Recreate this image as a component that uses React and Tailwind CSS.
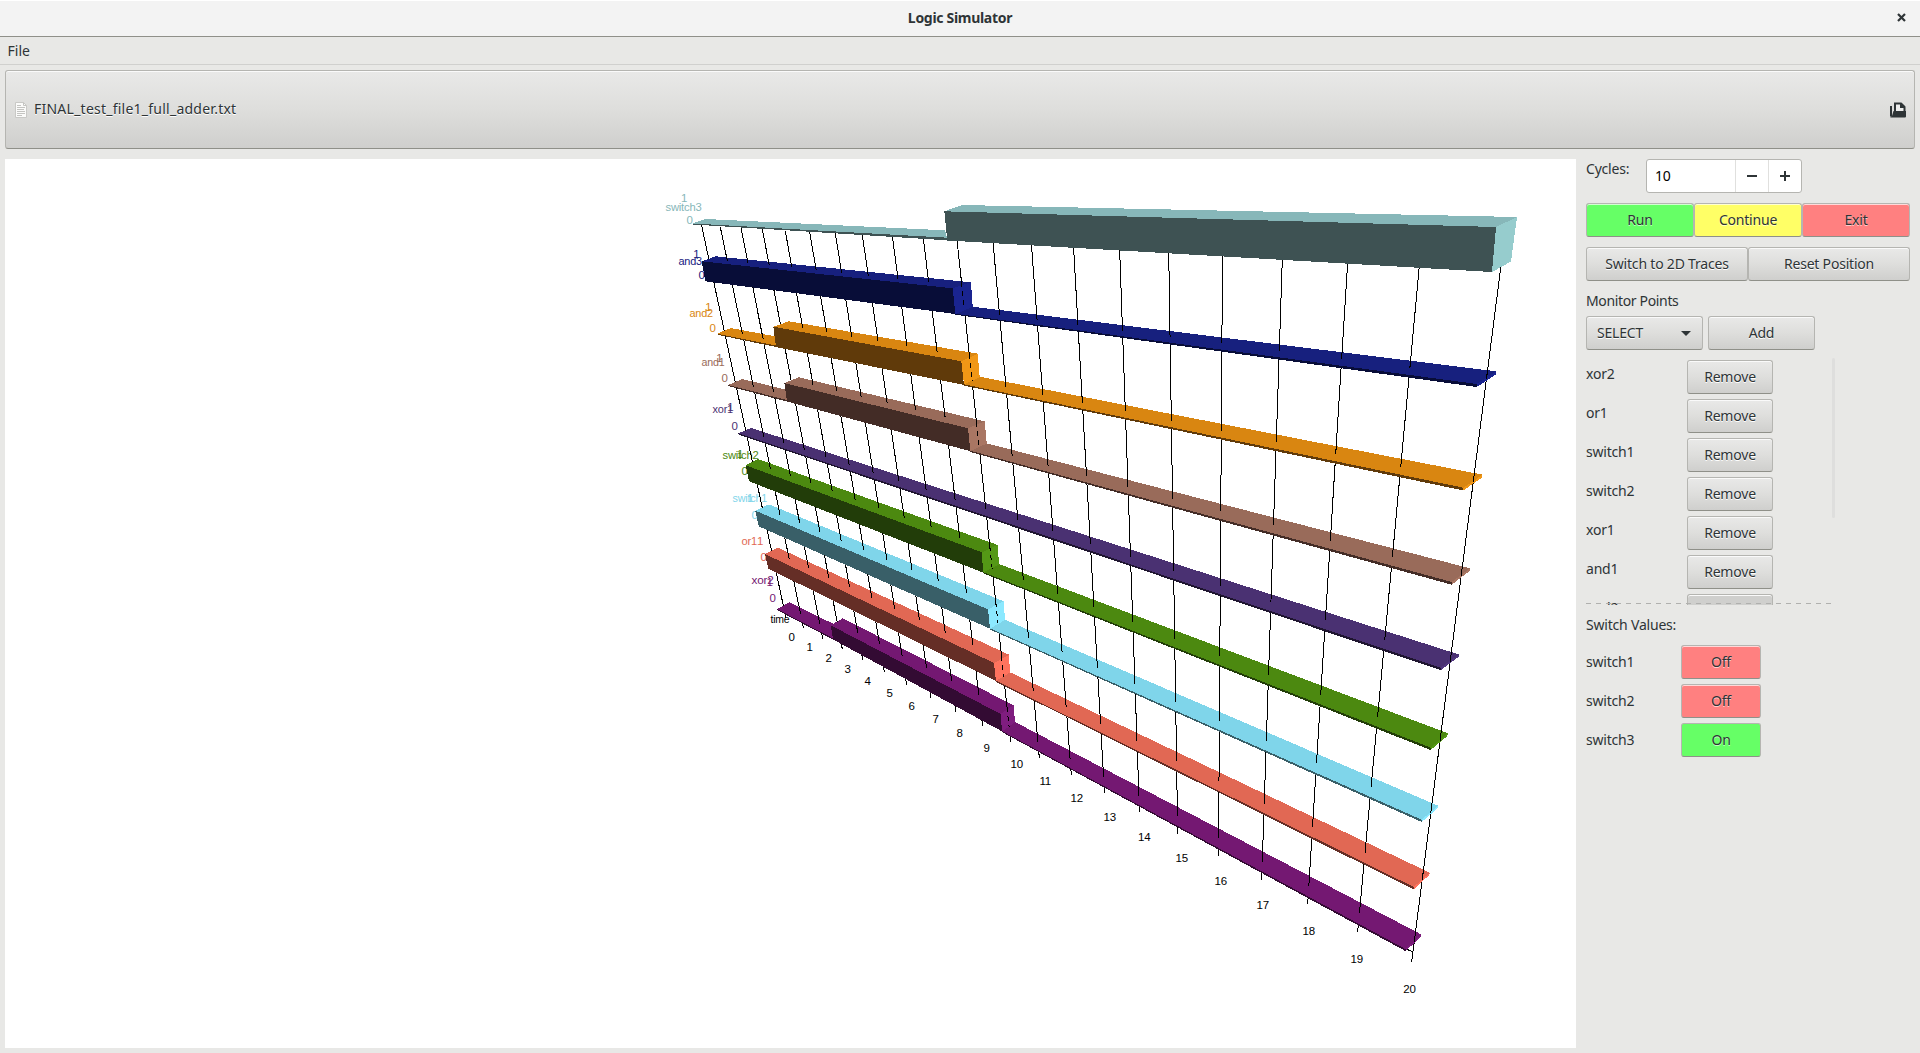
const BTN_BASE =
  'flex items-center justify-center rounded-[3px] border border-[#b5b5b1] border-b-[#8f9089] shadow-[inset_0_1px_0_#fafafa] [text-shadow:0_1px_0_#ffffff] h-[34px]';
const BTN = `${BTN_BASE} bg-gradient-to-b from-[#e9e9e8] via-[#dededc] to-[#cfcfcd]`;
const TINT =
  'flex items-center justify-center rounded-[3px] border border-[#b5b5b1] border-b-[#8f9089] shadow-[inset_0_1px_0_rgba(255,255,255,0.7)] [text-shadow:0_1px_0_rgba(255,255,255,0.6)] h-[34px]';

// Each trace: label anchors and faces in canvas pixels.
// Segments hold the front-top (f), front-bottom (b) and back-top (k) edges, left to right.
const TRACES = [
  {
    name: 'switch3', w: 36, nx: 665.5, ny: 211, one: [681, 202], zero: [686.5, 224],
    top: '#87b7b9', front: '#3e5253', end: '#96cccd',
    segs: [
      { f: [692.7, 223.5, 947, 237.7], b: [693, 224.5, 947, 240.3], k: [705, 219, 945, 230.3] },
      { f: [944.3, 211.3, 1496, 227], b: [947.3, 240.5, 1492, 272], k: [962.3, 205, 1517, 217] },
    ],
    ends: [[1496, 227, 1517, 217, 1511, 261.5, 1492, 272]],
  },
  {
    name: 'and3', w: 23.5, nx: 678.5, ny: 264.5, one: [693.3, 258], zero: [698.5, 279],
    top: '#17207e', front: '#080d38', end: '#1a2490',
    segs: [
      { f: [955.3, 313.7, 1476.7, 384], b: [955.3, 314.7, 1476.7, 387], k: [972.7, 306.7, 1496, 371.3] },
      { f: [701.7, 261.3, 952.7, 288.3], b: [705.3, 281.3, 955.3, 314], k: [715.7, 256.3, 971, 282.3] },
    ],
    ends: [
      [952.7, 288.3, 971, 282.3, 972.7, 307, 955.3, 314],
      [1476.7, 384, 1496, 371.3, 1496, 374.5, 1476.7, 387],
    ],
  },
  {
    name: 'and2', w: 23.5, nx: 689.5, ny: 316.5, one: [705.3, 310.5], zero: [709.5, 332],
    top: '#d98611', front: '#603a0a', end: '#f19716',
    segs: [
      { f: [717.3, 333.7, 776, 345.5], b: [717.6, 334.8, 776, 347], k: [730.7, 328, 776, 336.5] },
      { f: [964, 384.3, 1463.3, 487.7], b: [964, 385.6, 1463.3, 490.5], k: [979.7, 376.7, 1482.7, 474.7] },
      { f: [773.3, 326.7, 961.3, 361.3], b: [776, 347, 964, 385], k: [789, 321.3, 977.7, 353.7] },
    ],
    ends: [
      [961.3, 361.3, 977.7, 353.7, 979.7, 377, 964, 384.6],
      [1463.3, 487.7, 1482.7, 474.7, 1482, 477.5, 1463.3, 490.5],
    ],
  },
  {
    name: 'and1', w: 23, nx: 701.5, ny: 366, one: [716.3, 362], zero: [721.5, 382],
    top: '#996b5a', front: '#432c26', end: '#a97663',
    segs: [
      { f: [728.3, 385, 787, 400], b: [728.6, 386.2, 787, 401.6], k: [742.3, 379, 787, 390] },
      { f: [970.3, 450.7, 1451.7, 582], b: [970.3, 452, 1451.7, 584.7], k: [986.7, 443.3, 1470, 568.3] },
      { f: [784.3, 383, 968, 428.3], b: [787, 401.5, 970.3, 451.2], k: [799, 377.3, 984.7, 421.3] },
    ],
    ends: [
      [968, 428.3, 984.7, 421.3, 986.7, 443.5, 970.3, 451],
      [1451.7, 582, 1470, 568.3, 1469.5, 571, 1451.7, 584.7],
    ],
  },
  {
    name: 'xor1', w: 20.5, nx: 712.5, ny: 413, one: [727.3, 411], zero: [731.5, 430],
    top: '#4a3172', front: '#1f1530', end: '#533880',
    segs: [{ f: [738.3, 433.4, 1440.7, 667.6], b: [738.6, 434.6, 1440.7, 670.2], k: [751, 428, 1459, 654.5] }],
    ends: [[1440.7, 667.6, 1459, 654.5, 1458.5, 657, 1440.7, 670.2]],
  },
  {
    name: 'switch2', w: 36, nx: 722.5, ny: 459, one: [737, 458], zero: [741.5, 475.3],
    top: '#4c8910', front: '#223d09', end: '#549816',
    segs: [
      { f: [983, 572, 1430.7, 747.6], b: [983, 573.3, 1430.7, 750], k: [999, 564, 1447.7, 733.2] },
      { f: [745.7, 465.3, 982, 552.3], b: [749, 481.3, 983, 572.5], k: [758, 459, 997.7, 545] },
    ],
    ends: [
      [982, 552.3, 997.7, 545, 999, 564.3, 983, 572.5],
      [1430.7, 747.6, 1447.7, 733.2, 1447.3, 736, 1430.7, 750],
    ],
  },
  {
    name: 'switch1', w: 34.5, nx: 732.5, ny: 502, one: [747, 502], zero: [751.5, 519],
    top: '#7fd5ea', front: '#395f68', end: '#8ce9ff',
    segs: [
      { f: [990, 628.3, 1421.7, 819.7], b: [990, 629.5, 1421.7, 822], k: [1005, 619.7, 1438, 805.7] },
      { f: [755.3, 510.7, 988, 609.3], b: [758.7, 526.3, 990, 628.7], k: [769, 504.3, 1003.7, 601.3] },
    ],
    ends: [
      [988, 609.3, 1003.7, 601.3, 1005, 620, 990, 628.7],
      [1421.7, 819.7, 1438, 805.7, 1437.5, 808.5, 1421.7, 822],
    ],
  },
  {
    name: 'or1', w: 15.5, nx: 741.5, ny: 544.5, one: [757, 545], zero: [760.5, 561],
    top: '#e16854', front: '#652e26', end: '#ff735e',
    segs: [
      { f: [996, 680.7, 1413.7, 887], b: [996, 681.9, 1413.7, 889.4], k: [1010, 672.3, 1429.7, 872.7] },
      { f: [765, 554, 994, 663], b: [768.3, 568.6, 996, 681], k: [778, 547.7, 1009, 654.7] },
    ],
    ends: [
      [994, 663, 1009, 654.7, 1010, 672.5, 996, 681],
      [1413.7, 887, 1429.7, 872.7, 1429.3, 875, 1413.7, 889.4],
    ],
  },
  {
    name: 'xor2', w: 22, nx: 751.5, ny: 584.3, one: [766.5, 585.5], zero: [769.5, 602],
    top: '#741872', front: '#330b33', end: '#7f1d7f',
    segs: [
      { f: [777, 609, 833, 638.3], b: [777.3, 610.2, 833, 639.5], k: [789.3, 602.3, 833, 623.7] },
      { f: [1002, 731, 1405.7, 949.2], b: [1002, 732.1, 1405.7, 951.2], k: [1015, 722, 1421, 934.3] },
      { f: [830.7, 625.3, 1000.7, 714], b: [833, 639.5, 1002, 731.4], k: [842.7, 618.3, 1013.7, 705.3] },
    ],
    ends: [
      [1000.7, 714, 1013.7, 705.3, 1015, 722.3, 1002, 731.4],
      [1405.7, 949.2, 1421, 934.3, 1420.6, 936.7, 1405.7, 951.2],
    ],
  },
];

// Cycle lines: top x, top y, bottom x, bottom y
const LINES = [
  [701.3, 224, 786, 618], [720.3, 227, 803.5, 628], [741, 228, 822.7, 638.5], [762.3, 229, 842.3, 649],
  [785.3, 231, 862.7, 660], [809.7, 232, 884.3, 671.7], [835.3, 233, 906.7, 685], [862.3, 235, 931, 698],
  [892.3, 236, 955.7, 711.5], [923.3, 238, 982.7, 726.3], [957, 240, 1010.7, 741.7], [993, 242, 1039.3, 757.7],
  [1031.4, 244, 1071.3, 775], [1073.5, 246, 1104.5, 793.3], [1119.6, 248, 1139.5, 812.5], [1168.7, 250, 1177.7, 834],
  [1222.5, 253, 1218.5, 855.7], [1282.4, 257, 1261.7, 879.7], [1347.8, 260, 1307.7, 904.3], [1419.6, 263, 1357.7, 931.7],
  [1501.2, 264, 1411.7, 961.7],
];

const TICKS = [
  [791.5, 641], [809.5, 650.5], [828.5, 662], [847.5, 673], [867.5, 684.5], [889.5, 697], [911.5, 710],
  [935.5, 723], [959.5, 737], [986.5, 751.7], [1016.7, 767.7], [1045.3, 784.7], [1076.7, 802], [1109.7, 821],
  [1144.3, 840.7], [1181.7, 862], [1220.7, 885], [1262.7, 909], [1308.7, 935], [1356.7, 963], [1409.5, 993],
];

const topFace = ({ f, k }) => `${f[0]},${f[1]} ${k[0]},${k[1]} ${k[2]},${k[3]} ${f[2]},${f[3]}`;
const frontFace = ({ f, b }) => `${f[0]},${f[1]} ${f[2]},${f[3]} ${b[2]},${b[3]} ${b[0]},${b[1]}`;
const nearHalf = ({ f, k }) =>
  `${f[0]},${f[1]} ${(f[0] + k[0]) / 2},${(f[1] + k[1]) / 2} ${(f[2] + k[2]) / 2},${(f[3] + k[3]) / 2} ${f[2]},${f[3]}`;

function Traces() {
  return (
    <svg
      className="block h-full w-full"
      viewBox="5 159 1571 889"
      fontFamily='"Liberation Sans", Arial, sans-serif'
      fontSize="11.5"
    >
      {TRACES.map((t) => (
        <g key={t.name} fill={t.top}>
          <text x={t.nx} y={t.ny} textLength={t.w} lengthAdjust="spacingAndGlyphs">{t.name}</text>
          <text x={t.one[0]} y={t.one[1]}>1</text>
          <text x={t.zero[0]} y={t.zero[1]}>0</text>
        </g>
      ))}
      <text x="770.5" y="623" textLength="19" lengthAdjust="spacingAndGlyphs">time</text>
      {TICKS.map(([x, y], i) => (
        <text key={i} x={x} y={y} textAnchor="middle">{i}</text>
      ))}
      <g shapeRendering="crispEdges">
        {TRACES.map((t) => (
          <g key={t.name}>
            {t.segs.map((s, i) => (
              <g key={i}>
                <polygon points={topFace(s)} fill={t.top} />
                <polygon points={frontFace(s)} fill={t.front} />
              </g>
            ))}
          </g>
        ))}
        {LINES.map(([x1, y1, x2, y2], i) => (
          <line key={i} x1={x1} y1={y1} x2={x2} y2={y2} stroke="#000" strokeWidth="1" />
        ))}
        <line x1="1406" y1="949" x2="1412" y2="951.5" stroke="#000" />
        {TRACES.map((t, n) => (
          <g key={t.name}>
            {t.segs.map((s, i) => (
              <g key={i}>
                <polygon points={n === 0 ? topFace(s) : nearHalf(s)} fill={t.top} />
                <polygon points={frontFace(s)} fill={t.front} />
              </g>
            ))}
            {t.ends.map((e, i) => (
              <polygon key={i} points={e.join(' ')} fill={t.end} />
            ))}
          </g>
        ))}
        {LINES.slice(10, 11).map(([x1, y1, x2, y2]) =>
          TRACES.filter((t) => t.ends.length > 1).map((t) => {
            const e = t.ends[0];
            const ya = (e[1] + e[3]) / 2 - 3;
            const yb = (e[5] + e[7]) / 2 - 1;
            const at = (y) => x1 + ((x2 - x1) * (y - y1)) / (y2 - y1);
            return (
              <line key={t.name} x1={at(ya)} y1={ya} x2={at(yb)} y2={yb} stroke="#000" strokeDasharray="5 4" />
            );
          })
        )}
        {LINES.slice(20).map(([x1, y1, x2, y2]) =>
          TRACES.slice(1).map((t) => {
            const e = t.ends[t.ends.length - 1];
            const ya = e[3];
            const yb = (e[5] + e[7]) / 2 - 2;
            const at = (y) => x1 + ((x2 - x1) * (y - y1)) / (y2 - y1);
            return <line key={t.name} x1={at(ya)} y1={ya} x2={at(yb)} y2={yb} stroke="#000" />;
          })
        )}
      </g>
    </svg>
  );
}

const MONITORS = ['xor2', 'or1', 'switch1', 'switch2', 'xor1', 'and1', 'and2'];
const SWITCHES = [['switch1', false], ['switch2', false], ['switch3', true]];

export default function App() {
  return (
    <div className="flex h-[1053px] w-[1920px] flex-col overflow-hidden bg-[#e8e8e6] font-['Noto_Sans','Open_Sans',sans-serif] text-[14px] leading-[20px] tracking-[-0.2px] text-[#2e3436]">
      <header className="relative flex h-[37px] shrink-0 items-center justify-center border-t border-b border-t-white border-b-[#8f9089] bg-[#f3f3f3] pb-[2px]">
        <h1 className="text-[14px] font-bold tracking-[-0.3px]">Logic Simulator</h1>
        <svg className="absolute right-[14px] top-[12px] h-[9px] w-[9px]" viewBox="0 0 9 9" stroke="#2e3436" strokeWidth="2.2">
          <path d="M1 1l7 7M8 1l-7 7" />
        </svg>
      </header>
      <nav className="flex h-[28px] shrink-0 items-center border-b border-[#d0d0ce] pl-[7.500px] tracking-normal">File</nav>
      <button className="mx-[5px] mt-[5px] flex h-[79px] shrink-0 items-center rounded-[3px] border border-[#b5b5b1] border-b-[#8f9089] bg-gradient-to-b from-[#e9e9e8] via-[#dededc] to-[#cfcfcd] pl-[9px] pr-[8px] shadow-[inset_0_1px_0_#fafafa] [text-shadow:0_1px_0_#ffffff]">
        <svg className="h-4 w-3 shrink-0" viewBox="0 0 12 16">
          <path d="M.5.5h8l3 3v12H.5z" fill="#fbfbfa" stroke="#c9c9c6" />
          <path d="M8.500.5v3h3M2 3.500h4M2 5.500h8M2 7.500h7M2 9.500h8M2 11.500h8M2 13.500h5" fill="none" stroke="#c4c4c1" />
        </svg>
        <span className="mb-[2px] ml-[7px] tracking-[0.24px]">FINAL_test_file1_full_adder.txt</span>
        <svg className="ml-auto h-4 w-4" viewBox="0 0 16 16">
          <path d="M1 4v10" stroke="#2e3436" strokeWidth="2" />
          <path d="M5 9V1.500h6L14.500 5v4" fill="#eeeeed" stroke="#2e3436" strokeWidth="2" />
          <path d="M10 1h1.500L15 4.500V6h-5z" fill="#2e3436" />
          <path d="M3.500 9H16v5.500q0 1-1 1H1q-1 0-1-1l2-.5z" fill="#2e3436" />
        </svg>
      </button>
      <main className="mt-[10px] flex min-h-0 flex-1 pb-[5px] pl-[5px]">
        <section className="h-[889px] w-[1571px] shrink-0 bg-white">
          <Traces />
        </section>
        <aside className="ml-[10px] flex w-[324px] flex-col">
          <div className="flex">
            <span className="w-[60px]">Cycles:</span>
            <div className="flex h-[34px] w-[156px] rounded-[3px] border border-[#b5b5b1] bg-white">
              <span className="flex w-[89px] items-center border-r border-[#e0e0de] pl-[8px] text-black">10</span>
              <span className="flex w-[33px] items-center justify-center border-r border-[#e0e0de]">
                <span className="h-[2px] w-[10px] bg-[#2e3436]" />
              </span>
              <span className="flex flex-1 items-center justify-center">
                <svg className="h-[10px] w-[10px]" viewBox="0 0 10 10" stroke="#2e3436" strokeWidth="2">
                  <path d="M5 0v10M0 5h10" />
                </svg>
              </span>
            </div>
          </div>
          <div className="mt-[10px] grid grid-cols-3">
            <button className={`${TINT} bg-[#66ff66]`}>Run</button>
            <button className={`${TINT} bg-[#ffff66]`}>Continue</button>
            <button className={`${TINT} bg-[#ff8080]`}>Exit</button>
          </div>
          <div className="mt-[10px] grid grid-cols-2">
            <button className={BTN}>Switch to 2D Traces</button>
            <button className={BTN}>Reset Position</button>
          </div>
          <div className="mt-[10px] tracking-[-0.35px]">Monitor Points</div>
          <div className="mt-[5px] flex gap-[5px]">
            <div className={`${BTN} w-[117px]`}>
              <span className="ml-[10px]">SELECT</span>
              <svg className="ml-auto mr-[11px] h-[5px] w-[10px]" viewBox="0 0 10 5" fill="#2e3436">
                <path d="M0 0h10L5 5z" />
              </svg>
            </div>
            <button className={`${BTN} w-[107px]`}>Add</button>
          </div>
          <div className="relative mt-[5px] h-[250px] w-[249px] overflow-hidden">
            <ul className="flex flex-col gap-[5px] pt-[5px]">
              {MONITORS.map((m, i) => (
                <li key={m} className="flex h-[34px]">
                  <span className="mt-[4px] w-[101px]">{m}</span>
                  <button className={i === 6 ? `${BTN_BASE} w-[86px] bg-[#cfcfcd]` : `${BTN} w-[86px]`}>Remove</button>
                </li>
              ))}
            </ul>
            <span className="absolute right-0 top-[3px] h-[160px] w-[3px] rounded-full bg-[#dededd]" />
            <span className="absolute bottom-[1px] left-0 h-px w-full bg-[repeating-linear-gradient(to_right,#b0b0ae_0px,#b0b0ae_5px,transparent_5px,transparent_10px)]" />
          </div>
          <div className="mt-[10px]">Switch Values:</div>
          <ul className="mt-[10px] flex flex-col gap-[5px]">
            {SWITCHES.map(([name, on]) => (
              <li key={name} className="flex">
                <span className="mt-[7px] w-[95px]">{name}</span>
                <button className={on ? `${TINT} w-[80px] bg-[#66ff66] shadow-none` : `${TINT} w-[80px] bg-[#ff8080]`}>
                  {on ? 'On' : 'Off'}
                </button>
              </li>
            ))}
          </ul>
        </aside>
      </main>
    </div>
  );
}
